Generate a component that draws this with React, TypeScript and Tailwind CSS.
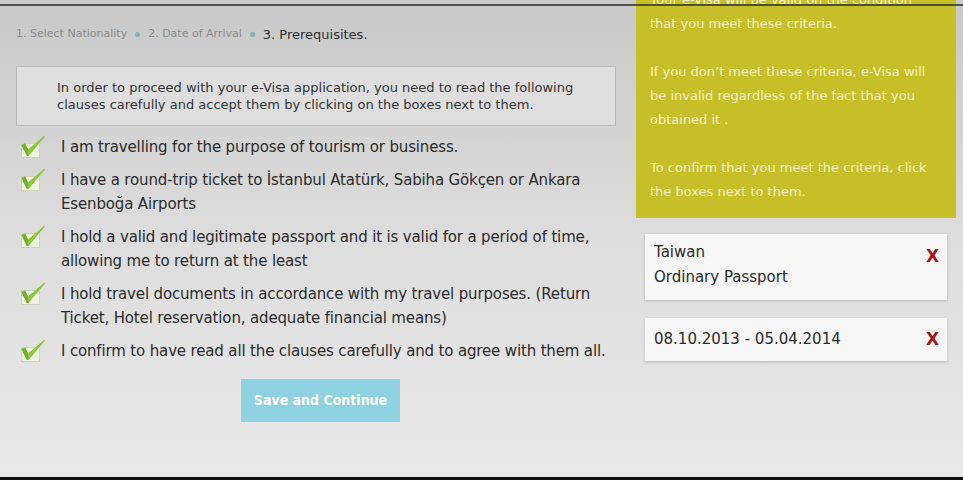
const font = { fontFamily: '"DejaVu Sans", Verdana, sans-serif' };
const btnFont = { fontFamily: '"DejaVu Sans Condensed", "Liberation Sans Narrow", "Liberation Sans", sans-serif' };

const clauses = [
  ["I am travelling for the purpose of tourism or business."],
  ["I have a round-trip ticket to İstanbul Atatürk, Sabiha Gökçen or Ankara", "Esenboğa Airports"],
  ["I hold a valid and legitimate passport and it is valid for a period of time,", "allowing me to return at the least"],
  ["I hold travel documents in accordance with my travel purposes. (Return", "Ticket, Hotel reservation, adequate financial means)"],
  ["I confirm to have read all the clauses carefully and to agree with them all."],
];

function CheckBox() {
  return (
    <svg width="26" height="24" viewBox="0 0 26 24" className="shrink-0">
      <rect x="1.5" y="8.5" width="18" height="14" fill="#eef3df" stroke="#cfd3c6" />
      <path d="M1.5 10 L5 8.5 L8 14.5 L24.5 0.5 L25 1.5 L8.5 21 L7 21 Z" fill="#8cc63e" />
      <path d="M1.5 10 L5 8.5 L8 14.5 L8.5 21 L7 21 Z" fill="#74b02f" />
    </svg>
  );
}

function RemoveX() {
  return <span className="text-[17px] font-bold leading-none text-[#a3161a]">X</span>;
}

export default function App() {
  return (
    <div
      className="relative h-[480px] w-[963px] overflow-hidden bg-gradient-to-b from-[#c8c8c8] via-[#dddddd] to-[#e8e8e8]"
      style={font}
    >
      {/* top and bottom rules */}
      <div className="pointer-events-none absolute left-0 right-0 top-[4px] h-[2px] bg-[#333]/80" />
      <div className="pointer-events-none absolute bottom-0 left-0 right-0 h-[3px] bg-[#111]" />

      <div className="flex">
        {/* Left column */}
        <div className="w-[636px] pl-[16px] pr-[20px]">
          <div className="flex h-[66px] items-center gap-[6px] pt-[3px] text-[11px] text-[#8a8a8a]">
            <span>1. Select Nationality</span>
            <span className="mx-[2px] h-[5px] w-[5px] rounded-full bg-[#7db6b9]" />
            <span>2. Date of Arrival</span>
            <span className="mx-[2px] h-[5px] w-[5px] rounded-full bg-[#7db6b9]" />
            <span className="text-[13px] text-[#2e2e2e]">3. Prerequisites.</span>
          </div>

          <div className="h-[60px] border border-[#b9b9b9] bg-[#dedede] pl-[40px] pt-[12px] text-[13px] leading-[17px] text-[#333]">
            <p>In order to proceed with your e-Visa application, you need to read the following</p>
            <p>clauses carefully and accept them by clicking on the boxes next to them.</p>
          </div>

          <ul className="mt-[9px] flex flex-col gap-[9px]">
            {clauses.map((lines) => (
              <li key={lines[0]} className="flex items-start gap-[15px] pl-[4px]">
                <CheckBox />
                <div className="whitespace-nowrap text-[15px] leading-[24px] tracking-[-0.15px] text-[#2b2b2b]">
                  {lines.map((l) => (
                    <p key={l}>{l}</p>
                  ))}
                </div>
              </li>
            ))}
          </ul>

          <button
            className="ml-[225px] mt-[16px] h-[43px] w-[159px] bg-[#8ed1e0] text-[14px] font-bold text-white"
            style={btnFont}
          >
            Save and Continue
          </button>
        </div>

        {/* Right column */}
        <div className="w-[320px]">
          <div className="h-[218px] overflow-hidden bg-[#c6bf28] pl-[14px] text-[13px] leading-[24px] text-[#f4f0c6]">
            <div className="-mt-[12px]">
              <p>Your e-Visa will be valid on the condition</p>
              <p>that you meet these criteria.</p>
              <p>&nbsp;</p>
              <p>If you don’t meet these criteria, e-Visa will</p>
              <p>be invalid regardless of the fact that you</p>
              <p>obtained it .</p>
              <p>&nbsp;</p>
              <p>To confirm that you meet the criteria, click</p>
              <p>the boxes next to them.</p>
            </div>
          </div>

          <div className="mx-[9px] mt-[16px] flex h-[66px] items-start justify-between bg-[#f6f6f6] pl-[9px] pr-[8px] pt-[6px] text-[15px] leading-[25px] text-[#2b2b2b] shadow-[0_1px_3px_rgba(0,0,0,0.18)]">
            <div>
              <p>Taiwan</p>
              <p>Ordinary Passport</p>
            </div>
            <div className="pt-[5px]">
              <RemoveX />
            </div>
          </div>

          <div className="mx-[9px] mt-[18px] flex h-[43px] items-center justify-between bg-[#f6f6f6] pl-[9px] pr-[8px] text-[15px] text-[#2b2b2b] shadow-[0_1px_3px_rgba(0,0,0,0.18)]">
            <span>08.10.2013 - 05.04.2014</span>
            <RemoveX />
          </div>
        </div>
      </div>
    </div>
  );
}
